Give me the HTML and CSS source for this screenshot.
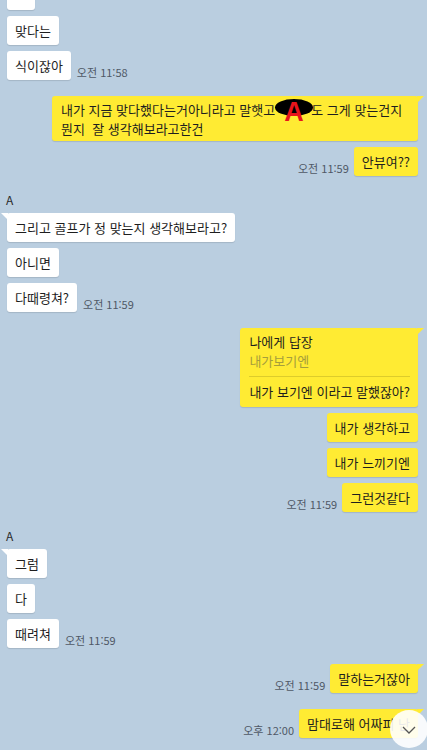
FILE: index.html
```html
<!DOCTYPE html>
<html lang="ko">
<head>
    <meta charset="UTF-8">
    <meta name="viewport" content="width=device-width, initial-scale=1.0">
    <title>채팅</title>
    <link rel="stylesheet" href="styles.css">
</head>
<body>
    <div class="chat">
        <div class="group left first">
            <div class="row"><div class="bubble cut"></div></div>
            <div class="row"><div class="bubble">맞다는</div></div>
            <div class="row"><div class="bubble">식이잖아</div><span class="time">오전 11:58</span></div>
        </div>

        <div class="group right">
            <div class="row wide-row">
                <div class="bubble tail wide">내가 지금 맞다했다는거아니라고 말햇고<span class="mask"><span class="blot"></span><span class="mark">A</span></span>도 그게 맞는건지<br>뭔지&nbsp;&nbsp;잘 생각해보라고한건</div>
            </div>
            <div class="row"><span class="time">오전 11:59</span><div class="bubble">안뷰여??</div></div>
        </div>

        <div class="group left">
            <div class="name">A</div>
            <div class="row"><div class="bubble tail">그리고 골프가 정 맞는지 생각해보라고?</div></div>
            <div class="row"><div class="bubble">아니면</div></div>
            <div class="row"><div class="bubble">다때령쳐?</div><span class="time">오전 11:59</span></div>
        </div>

        <div class="group right">
            <div class="row">
                <div class="bubble tail reply">
                    <div class="reply-to">나에게 답장</div>
                    <div class="quote">내가보기엔</div>
                    <div class="divider"></div>
                    <div>내가 보기엔 이라고 말했잖아?</div>
                </div>
            </div>
            <div class="row"><div class="bubble">내가 생각하고</div></div>
            <div class="row"><div class="bubble">내가 느끼기엔</div></div>
            <div class="row"><span class="time">오전 11:59</span><div class="bubble">그런것같다</div></div>
        </div>

        <div class="group left">
            <div class="name">A</div>
            <div class="row"><div class="bubble tail">그럼</div></div>
            <div class="row"><div class="bubble">다</div></div>
            <div class="row"><div class="bubble">때려쳐</div><span class="time">오전 11:59</span></div>
        </div>

        <div class="group right">
            <div class="row"><span class="time">오전 11:59</span><div class="bubble tail">말하는거잖아</div></div>
        </div>

        <div class="group right">
            <div class="row"><span class="time">오후 12:00</span><div class="bubble tail">맘대로해 어짜피 난</div></div>
        </div>
    </div>

    <!-- 아래로 스크롤 버튼 -->
    <div class="scroll-down">
        <svg width="14" height="8" viewBox="0 0 14 8"><polyline points="1,1 7,7 13,1" fill="none" stroke="#555" stroke-width="1.3"/></svg>
    </div>
</body>
</html>
```

FILE: styles.css
```css
body {
    margin: 0;
    background-color: #bacee0;
    font-family: "Noto Sans CJK KR", "Noto Sans", sans-serif;
    font-size: 13px;
    color: #1e1e1e;
    height: 750px;
    overflow: hidden;
}
.chat {
    display: flex;
    flex-direction: column;
    padding: 0 9px 0 7px;
}
.group {
    display: flex;
    flex-direction: column;
    gap: 6px;
    margin-bottom: 16px;
}
.group.first {
    margin-top: -19px;
}
.name {
    font-size: 12px;
    line-height: 15px;
    margin-left: -1px;
    color: #2a2a2a;
}
.row {
    display: flex;
    align-items: flex-end;
    gap: 6px;
}
.right .row {
    justify-content: flex-end;
    gap: 5px;
}
.right .wide-row {
    padding-left: 45px;
}
.bubble {
    position: relative;
    background-color: #ffffff;
    border-radius: 3px;
    padding: 5px 8px;
    line-height: 19px;
    box-shadow: 0 1px 1px rgba(0, 0, 0, 0.12);
    white-space: nowrap;
}
.bubble.cut {
    width: 12px;
    height: 19px;
}
.right .bubble {
    background-color: #ffeb33;
}
.bubble.wide {
    flex: 1;
    padding: 4px 8px 3px 9px;
}
.left .tail::before {
    content: "";
    position: absolute;
    left: -6px;
    top: 0;
    border-top: 7px solid #ffffff;
    border-left: 7px solid transparent;
}
.right .tail::after {
    content: "";
    position: absolute;
    right: -6px;
    top: 0;
    border-top: 7px solid #ffeb33;
    border-right: 7px solid transparent;
}
.time {
    font-size: 11px;
    line-height: 13px;
    margin-bottom: 1px;
    color: #4f5866;
    white-space: nowrap;
}
.mask {
    position: relative;
    display: inline-block;
    width: 36px;
    height: 19px;
    vertical-align: top;
}
.blot {
    position: absolute;
    left: 0;
    top: -1px;
    width: 38px;
    height: 17px;
    border-radius: 50%;
    background-color: #000;
}
.mark {
    position: absolute;
    left: 9px;
    top: -2px;
    font-family: "Liberation Sans", sans-serif;
    font-weight: bold;
    font-size: 27px;
    line-height: 28px;
    color: #e8141c;
}
.reply {
    padding: 4px 8px 6px 9px;
}
.quote {
    color: #a69e3c;
}
.divider {
    border-top: 1px solid rgba(120, 110, 20, 0.25);
    margin: 6px 0 5px;
}
.scroll-down {
    position: absolute;
    left: 390px;
    top: 710px;
    width: 38px;
    height: 38px;
    border-radius: 50%;
    background-color: rgba(255, 255, 255, 0.9);
    display: flex;
    align-items: center;
    justify-content: center;
    padding-top: 2px;
    box-sizing: border-box;
}
```
